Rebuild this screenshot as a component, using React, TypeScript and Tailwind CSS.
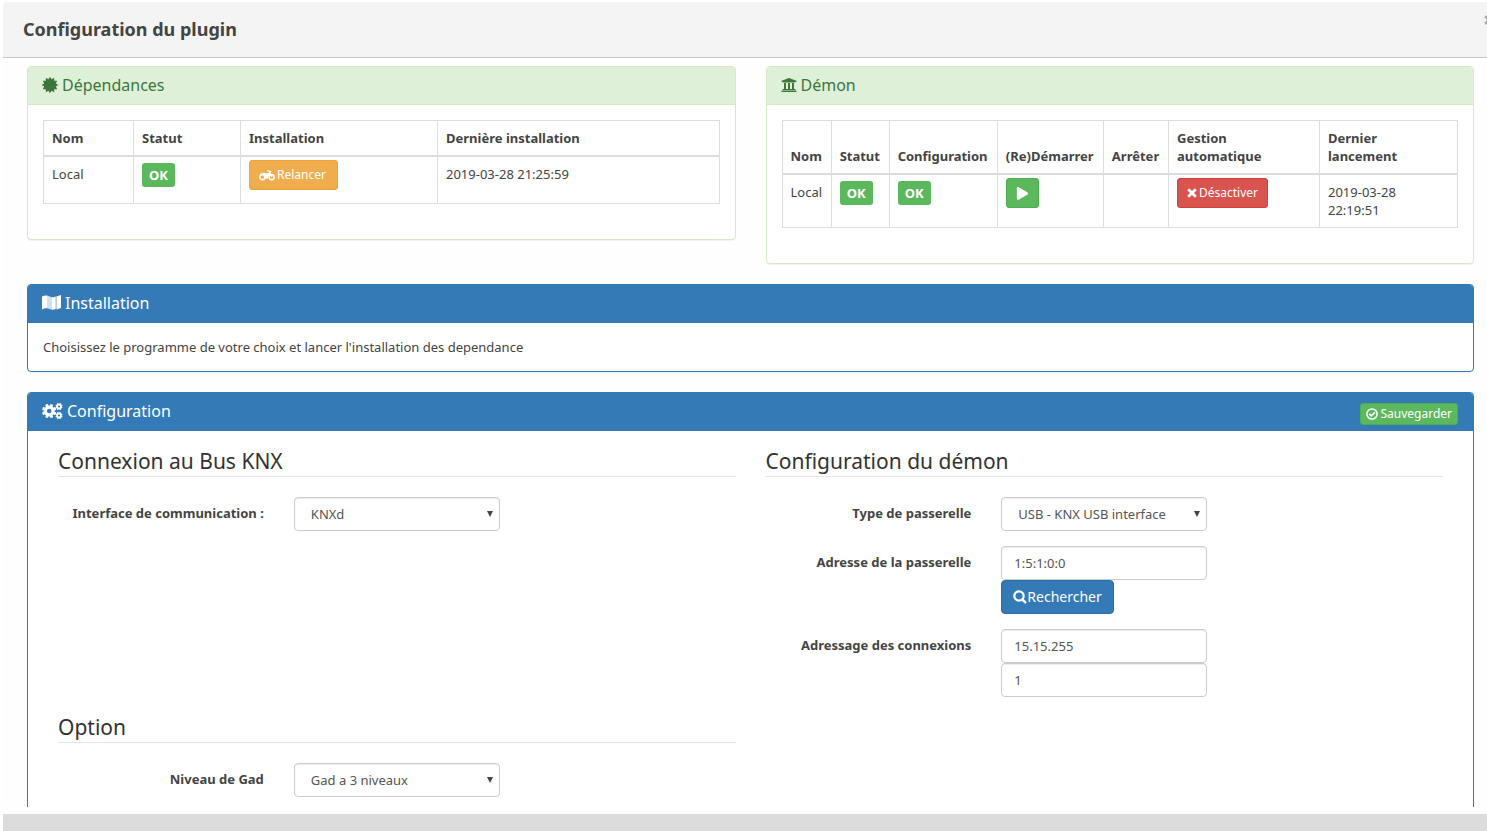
import type { ReactNode } from "react";
import { FaPlay, FaUniversity } from "react-icons/fa";

const CELL = "border border-[#ddd] p-2 align-top text-left";
const HEAD = "border border-b-2 border-[#ddd] p-2 align-bottom text-left font-bold";
const FIELD =
  "block h-[34px] w-full rounded border border-[#ccc] bg-white px-3 text-[13px] text-[#555] shadow-[inset_0_1px_1px_rgba(0,0,0,0.075)]";

// Evenly spaced star outline around (cx, cy)
function starPoints(cx: number, cy: number, outer: number, inner: number, tips: number) {
  return Array.from({ length: tips * 2 }, (_, i) => {
    const r = i % 2 ? inner : outer;
    const a = (i * Math.PI) / tips;
    return `${cx + r * Math.sin(a)},${cy - r * Math.cos(a)}`;
  }).join(" ");
}

function CertificateIcon() {
  return (
    <svg viewBox="0 0 16 16" className="size-4" fill="currentColor" aria-hidden="true">
      <polygon points={starPoints(8, 8, 8.3, 6, 12)} />
    </svg>
  );
}

function MapIcon() {
  return (
    <svg viewBox="0 0 19 15" className="h-[15px] w-[19px]" fill="currentColor" aria-hidden="true">
      <path d="M0 1.6Q2.5.2 5 .6v12.6q-2.6-.2-5 1.4z" />
      <path d="M5 .6 9.3 2v12.6L5 13.2z" opacity=".78" />
      <path d="M9.3 2q2.4.6 4.4-.6v12.6q-2 1.2-4.4.6z" />
      <path d="m13.7 1.4.8-.4v12.6l-.8.4z" opacity=".5" />
      <path d="M14.5 1.4 19 0v13l-4.5 1.4z" />
    </svg>
  );
}

function Gear({ cx, cy, r, hole }: { cx: number; cy: number; r: number; hole: number }) {
  const ring = r * 0.76;
  return (
    <g>
      <circle cx={cx} cy={cy} r={(ring + hole) / 2} fill="none" stroke="currentColor" strokeWidth={ring - hole} />
      {[0, 45, 90, 135, 180, 225, 270, 315].map((deg) => (
        <rect
          key={deg}
          x={cx - r * 0.2}
          y={cy - r}
          width={r * 0.4}
          height={r * 0.45}
          rx={r * 0.06}
          transform={`rotate(${deg + 22.5} ${cx} ${cy})`}
        />
      ))}
    </g>
  );
}

function CogsIcon() {
  return (
    <svg viewBox="0 0 21 16" className="h-4 w-[21px]" fill="currentColor" aria-hidden="true">
      <Gear cx={7.2} cy={8} r={7.2} hole={2.3} />
      <Gear cx={17} cy={3.5} r={3.6} hole={1.1} />
      <Gear cx={17} cy={12.5} r={3.6} hole={1.1} />
    </svg>
  );
}

function MotorcycleIcon() {
  return (
    <svg viewBox="0 0 16 11" className="h-[11px] w-4" fill="none" stroke="currentColor" aria-hidden="true">
      <circle cx="3.3" cy="7.3" r="2.5" strokeWidth="1.4" />
      <circle cx="12.7" cy="7.3" r="2.5" strokeWidth="1.4" />
      <path d="M1.4 4.1q3.4-1 5 3.9h2.2q0-3 2.1-4.2" strokeWidth="1.2" />
      <path d="M3 2.8h3l1.2 1 3-1.2 1.2 1.8-2.6 1.8L8 8.4H6L4.6 5.2z" fill="currentColor" stroke="none" />
      <path d="M8 .9h2.2l2.8 6.3M10.5 2.2l1.8-1" strokeWidth="1.2" />
    </svg>
  );
}

function CrossIcon() {
  return (
    <svg viewBox="0 0 10 10" className="size-[10px]" stroke="currentColor" strokeWidth="2.8" aria-hidden="true">
      <path d="m1.2 1.2 7.6 7.6m0-7.6L1.2 8.8" />
    </svg>
  );
}

function CheckCircleIcon() {
  return (
    <svg viewBox="0 0 12 12" className="size-3" fill="none" stroke="currentColor" aria-hidden="true">
      <circle cx="6" cy="6" r="5.1" strokeWidth="1.5" />
      <path d="m3.3 5.9 2 2 3.5-3.6" strokeWidth="1.7" />
    </svg>
  );
}

function SearchIcon() {
  return (
    <svg viewBox="0 0 14 14" className="size-[14px]" fill="none" stroke="currentColor" aria-hidden="true">
      <circle cx="6" cy="6" r="4.7" strokeWidth="2.2" />
      <path d="m9.3 9.3 3 3" strokeWidth="2.6" strokeLinecap="round" />
    </svg>
  );
}

function Panel({ tone, icon, title, action, children }: {
  tone: "success" | "primary";
  icon: ReactNode;
  title: string;
  action?: ReactNode;
  children: ReactNode;
}) {
  const border = tone === "success" ? "border-[#d6e9c6]" : "border-[#337ab7]";
  const head =
    tone === "success"
      ? "border-[#d6e9c6] bg-[#dff0d8] text-[#3c763d]"
      : "border-[#337ab7] bg-[#337ab7] text-white";
  return (
    <section className={`mb-5 rounded border bg-white shadow-[0_1px_1px_rgba(0,0,0,0.05)] ${border}`}>
      <div className={`flex h-[38px] items-center justify-between rounded-t-[3px] border-b pr-[15px] pl-[14px] ${head}`}>
        <h3 className="flex items-center gap-1 pb-[2px] text-base">
          {icon}
          {title}
        </h3>
        {action}
      </div>
      {children}
    </section>
  );
}

function Ok() {
  return (
    <div className="-my-1 pt-[2px]">
      <span className="inline-block rounded-[3px] bg-[#5cb85c] px-[7px] text-[13px] leading-6 font-bold text-white">OK</span>
    </div>
  );
}

function Legend({ children }: { children: ReactNode }) {
  return (
    <legend className="mb-5 block w-full border-b border-[#e5e5e5] text-[21px] leading-[30px] text-[#333]">
      {children}
    </legend>
  );
}

function Row({ id, label, children }: { id: string; label: string; children: ReactNode }) {
  return (
    <div className="mb-[15px] flex">
      <label htmlFor={id} className="w-1/3 shrink-0 pt-[7px] pr-5 text-right font-bold">
        {label}
      </label>
      <div className="ml-[10px] w-[206px]">{children}</div>
    </div>
  );
}

function Select({ id, value }: { id: string; value: string }) {
  return (
    <div className="relative">
      <select id={id} className={`${FIELD} appearance-none pl-4`}>
        <option>{value}</option>
      </select>
      <svg viewBox="0 0 6 6" className="pointer-events-none absolute top-[14px] right-[7px] size-[6px]" aria-hidden="true">
        <path d="M0 0h6L3 6z" fill="#444" />
      </svg>
    </div>
  );
}

export default function App() {
  return (
    <div className="flex h-screen flex-col overflow-hidden bg-white pt-[2px] pl-[3px] font-['Noto_Sans',sans-serif] text-[13px] leading-[18px] text-[#444]">
      <header className="flex h-14 shrink-0 items-center justify-between rounded-tl border-b border-[#c8c8c8] bg-[#f4f4f4] pl-5">
        <h1 className="pb-[2px] text-lg font-bold">Configuration du plugin</h1>
        <button type="button" aria-label="Fermer" className="-mr-[7px] mb-5 text-[#aaa]">
          <CrossIcon />
        </button>
      </header>

      <main className="min-h-0 flex-1 overflow-hidden bg-[#fefefe] pt-2 pr-[13px] pl-6">
        <div className="grid grid-cols-2 items-start gap-x-[30px]">
          <Panel tone="success" icon={<CertificateIcon />} title="Dépendances">
            <div className="p-[15px] pb-[35px]">
              <table className="w-full border-collapse">
                <thead>
                  <tr>
                    <th className={`${HEAD} w-[90px]`}>Nom</th>
                    <th className={`${HEAD} w-[107px]`}>Statut</th>
                    <th className={`${HEAD} w-[197px]`}>Installation</th>
                    <th className={HEAD}>Dernière installation</th>
                  </tr>
                </thead>
                <tbody>
                  <tr className="h-[47px]">
                    <td className={CELL}>Local</td>
                    <td className={CELL}><Ok /></td>
                    <td className={CELL}>
                      <button
                        type="button"
                        className="-my-[5px] flex h-[30px] items-center gap-[2px] rounded-[3px] border border-[#eea236] bg-[#f0ad4e] pr-[11px] pl-[9px] text-xs text-white"
                      >
                        <MotorcycleIcon />
                        Relancer
                      </button>
                    </td>
                    <td className={CELL}>2019-03-28 21:25:59</td>
                  </tr>
                </tbody>
              </table>
            </div>
          </Panel>

          <Panel tone="success" icon={<FaUniversity className="size-4" />} title="Démon">
            <div className="p-[15px] pb-[35px]">
              <table className="w-full border-collapse">
                <thead>
                  <tr>
                    <th className={HEAD}>Nom</th>
                    <th className={HEAD}>Statut</th>
                    <th className={HEAD}>Configuration</th>
                    <th className={HEAD}>(Re)Démarrer</th>
                    <th className={HEAD}>Arrêter</th>
                    <th className={`${HEAD} w-[151px]`}>Gestion automatique</th>
                    <th className={`${HEAD} w-[138px]`}>Dernier<br />lancement</th>
                  </tr>
                </thead>
                <tbody>
                  <tr>
                    <td className={CELL}>Local</td>
                    <td className={CELL}><Ok /></td>
                    <td className={CELL}><Ok /></td>
                    <td className={CELL}>
                      <button
                        type="button"
                        aria-label="Démarrer"
                        className="-my-[5px] flex h-[30px] w-[33px] items-center justify-center rounded-[3px] border border-[#4cae4c] bg-[#5cb85c] text-white"
                      >
                        <FaPlay className="size-[13px]" />
                      </button>
                    </td>
                    <td className={CELL} />
                    <td className={CELL}>
                      <button
                        type="button"
                        className="-my-[5px] flex h-[30px] items-center gap-[2px] rounded-[3px] border border-[#d43f3a] bg-[#d9534f] px-[9px] text-xs text-white"
                      >
                        <CrossIcon />
                        Désactiver
                      </button>
                    </td>
                    <td className={CELL}>2019-03-28<br />22:19:51</td>
                  </tr>
                </tbody>
              </table>
            </div>
          </Panel>
        </div>

        <Panel tone="primary" icon={<MapIcon />} title="Installation">
          <p className="p-[15px]">Choisissez le programme de votre choix et lancer l'installation des dependance</p>
        </Panel>

        <Panel
          tone="primary"
          icon={<CogsIcon />}
          title="Configuration"
          action={
            <button
              type="button"
              className="mt-1 flex h-[22px] items-center gap-[2px] rounded-[3px] border border-[#4cae4c] bg-[#5cb85c] px-[5px] text-xs text-white"
            >
              <CheckCircleIcon />
              Sauvegarder
            </button>
          }
        >
          <form className="grid grid-cols-2 gap-x-[30px] px-[30px] pt-[15px]">
            <fieldset>
              <Legend>Connexion au Bus KNX</Legend>
              <Row id="interface" label="Interface de communication :">
                <Select id="interface" value="KNXd" />
              </Row>
            </fieldset>
            <fieldset>
              <Legend>Configuration du démon</Legend>
              <Row id="gatewayType" label="Type de passerelle">
                <Select id="gatewayType" value="USB - KNX USB interface" />
              </Row>
              <Row id="gatewayAddress" label="Adresse de la passerelle">
                <input id="gatewayAddress" className={FIELD} defaultValue="1:5:1:0:0" />
                <button
                  type="button"
                  className="flex h-[34px] items-center rounded border border-[#2e6da4] bg-[#337ab7] px-[11px] text-sm text-white"
                >
                  <SearchIcon />
                  Rechercher
                </button>
              </Row>
              <Row id="connections" label="Adressage des connexions">
                <input id="connections" className={FIELD} defaultValue="15.15.255" />
                <input aria-label="Nombre de connexions" className={FIELD} defaultValue="1" />
              </Row>
            </fieldset>
            <fieldset>
              <Legend>Option</Legend>
              <Row id="gadLevel" label="Niveau de Gad">
                <Select id="gadLevel" value="Gad a 3 niveaux" />
              </Row>
            </fieldset>
          </form>
        </Panel>
      </main>

      <footer className="h-6 shrink-0 border-t-[7px] border-white bg-[#dcdcdc]" />
    </div>
  );
}
